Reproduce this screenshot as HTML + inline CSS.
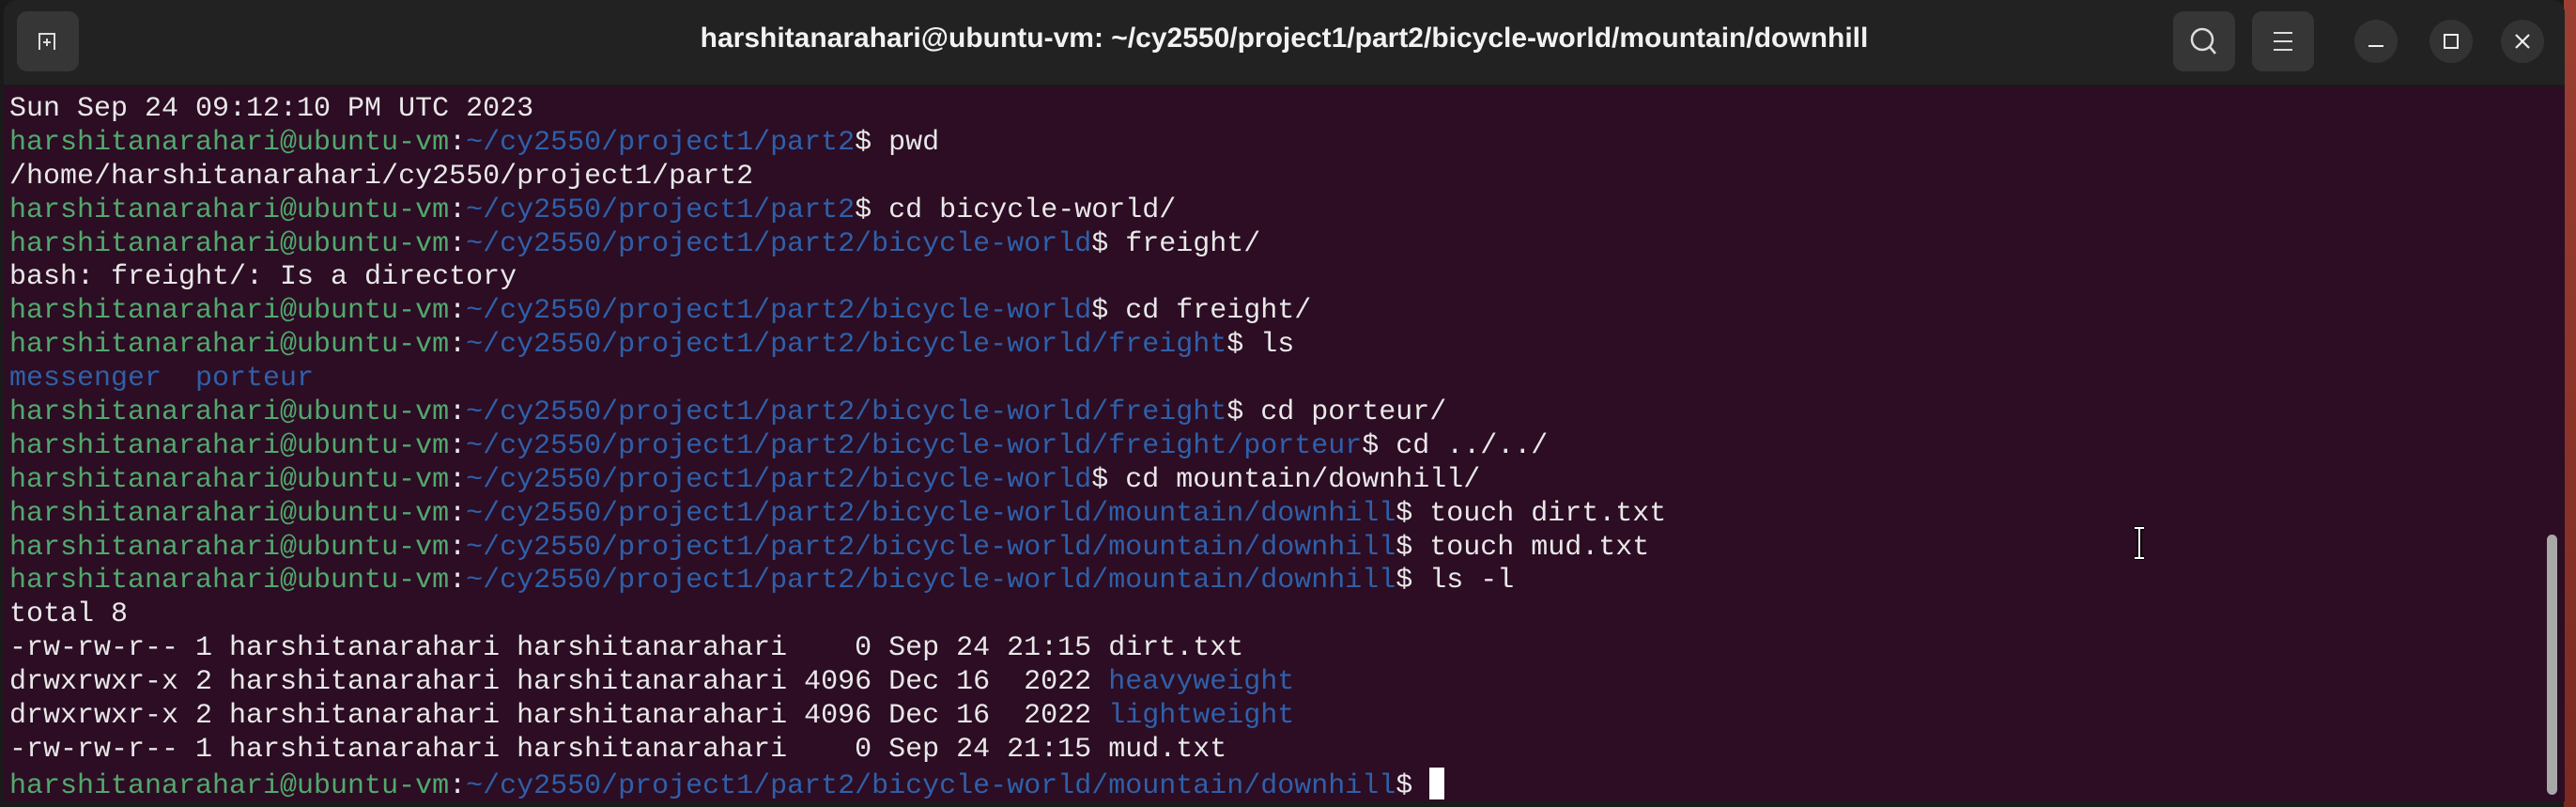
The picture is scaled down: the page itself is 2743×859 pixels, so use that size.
<!DOCTYPE html>
<html><head><meta charset="utf-8"><style>
html,body{margin:0;padding:0;}
body{width:2743px;height:859px;background:#1a1a1a;position:relative;overflow:hidden;}
.rs{position:absolute;right:0;top:0;width:13px;height:859px;background:linear-gradient(#9c3f32,#7a2a20);}
.win{position:absolute;left:4px;top:0;width:2727px;height:853px;background:#2c0d23;border-radius:14px 14px 0 0;overflow:hidden;}
.tb{position:absolute;left:0;top:0;width:100%;height:90px;background:#222222;border-bottom:2px solid #1a1a1a;}
.title{position:absolute;left:0;right:0;top:24px;text-align:center;color:#f2f2f2;font:bold 30px "Liberation Sans",sans-serif;}
.btn{position:absolute;top:12px;width:66px;height:64px;background:#363636;border-radius:11px;}
.cir{position:absolute;top:21px;width:46px;height:46px;border-radius:50%;background:#333;}
.term{position:absolute;left:6px;top:99px;font:30px "Liberation Mono",monospace;color:#e8e8e8;white-space:pre;}
.term div{height:35.9px;line-height:35.9px;}
.g{color:#52a86e;}.b{color:#2f60aa;}
.cur{display:inline-block;width:16px;height:34px;background:#fff;vertical-align:-7px;}
.sb{position:absolute;left:2708px;top:569px;width:11px;height:277px;background:#a8a8a8;border-radius:6px;}
</style></head><body>
<div class="rs"></div>
<div class="win">
<div class="tb">
<div class="btn" style="left:14px"><svg width="66" height="64"><path d="M24 41 V24 H40 V41" fill="none" stroke="#ddd" stroke-width="2"/><path d="M28 33 H36 M32 29 V37" stroke="#ddd" stroke-width="2"/></svg></div>
<div class="title">harshitanarahari@ubuntu-vm: ~/cy2550/project1/part2/bicycle-world/mountain/downhill</div>
<div class="btn" style="left:2310px"><svg width="66" height="64"><circle cx="31" cy="30" r="11" fill="none" stroke="#ddd" stroke-width="2.5"/><path d="M39 38 L45 45" stroke="#ddd" stroke-width="2.5"/></svg></div>
<div class="btn" style="left:2394px"><svg width="66" height="64"><path d="M23 23 H43 M23 32 H43 M23 41 H43" stroke="#ddd" stroke-width="2"/></svg></div>
<div class="cir" style="left:2503px"><svg width="46" height="46"><path d="M15 28 H31" stroke="#eee" stroke-width="2"/></svg></div>
<div class="cir" style="left:2583px"><svg width="46" height="46"><rect x="16" y="16" width="14" height="14" fill="none" stroke="#eee" stroke-width="2"/></svg></div>
<div class="cir" style="left:2659px"><svg width="46" height="46"><path d="M16 16 L30 30 M30 16 L16 30" stroke="#eee" stroke-width="2.2"/></svg></div>
</div>
<div class="term"><div>Sun Sep 24 09:12:10 PM UTC 2023</div><div><span class="g">harshitanarahari@ubuntu-vm</span>:<span class="b">~/cy2550/project1/part2</span>$ pwd</div><div>/home/harshitanarahari/cy2550/project1/part2</div><div><span class="g">harshitanarahari@ubuntu-vm</span>:<span class="b">~/cy2550/project1/part2</span>$ cd bicycle-world/</div><div><span class="g">harshitanarahari@ubuntu-vm</span>:<span class="b">~/cy2550/project1/part2/bicycle-world</span>$ freight/</div><div>bash: freight/: Is a directory</div><div><span class="g">harshitanarahari@ubuntu-vm</span>:<span class="b">~/cy2550/project1/part2/bicycle-world</span>$ cd freight/</div><div><span class="g">harshitanarahari@ubuntu-vm</span>:<span class="b">~/cy2550/project1/part2/bicycle-world/freight</span>$ ls</div><div><span class="b">messenger</span>  <span class="b">porteur</span></div><div><span class="g">harshitanarahari@ubuntu-vm</span>:<span class="b">~/cy2550/project1/part2/bicycle-world/freight</span>$ cd porteur/</div><div><span class="g">harshitanarahari@ubuntu-vm</span>:<span class="b">~/cy2550/project1/part2/bicycle-world/freight/porteur</span>$ cd ../../</div><div><span class="g">harshitanarahari@ubuntu-vm</span>:<span class="b">~/cy2550/project1/part2/bicycle-world</span>$ cd mountain/downhill/</div><div><span class="g">harshitanarahari@ubuntu-vm</span>:<span class="b">~/cy2550/project1/part2/bicycle-world/mountain/downhill</span>$ touch dirt.txt</div><div><span class="g">harshitanarahari@ubuntu-vm</span>:<span class="b">~/cy2550/project1/part2/bicycle-world/mountain/downhill</span>$ touch mud.txt</div><div><span class="g">harshitanarahari@ubuntu-vm</span>:<span class="b">~/cy2550/project1/part2/bicycle-world/mountain/downhill</span>$ ls -l</div><div>total 8</div><div>-rw-rw-r-- 1 harshitanarahari harshitanarahari    0 Sep 24 21:15 dirt.txt</div><div>drwxrwxr-x 2 harshitanarahari harshitanarahari 4096 Dec 16  2022 <span class="b">heavyweight</span></div><div>drwxrwxr-x 2 harshitanarahari harshitanarahari 4096 Dec 16  2022 <span class="b">lightweight</span></div><div>-rw-rw-r-- 1 harshitanarahari harshitanarahari    0 Sep 24 21:15 mud.txt</div><div><span class="g">harshitanarahari@ubuntu-vm</span>:<span class="b">~/cy2550/project1/part2/bicycle-world/mountain/downhill</span>$ <span class="cur"></span></div></div>
<svg style="position:absolute;left:2266px;top:560px" width="16" height="36"><path d="M3 2 H13 M8 2 V34 M3 34 H13" stroke="#000" stroke-width="5"/><path d="M3 2 H13 M8 2 V34 M3 34 H13" stroke="#fff" stroke-width="2"/></svg>
<div class="sb"></div>
</div>
</body></html>
